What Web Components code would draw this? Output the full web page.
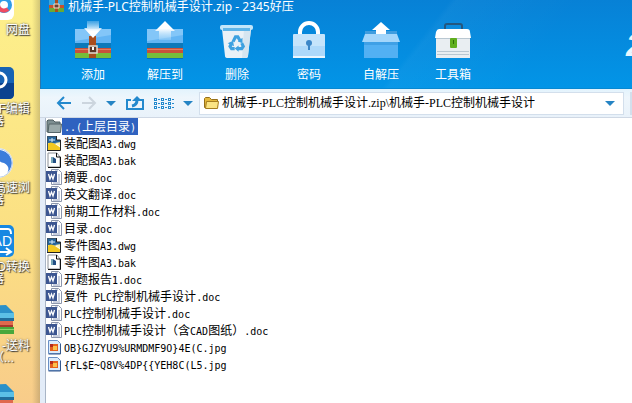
<!DOCTYPE html>
<html lang="zh-CN">
<head>
<meta charset="utf-8">
<title>2345好压</title>
<style>
  html, body { height: 100%; }
  body {
    margin: 0;
    display: grid;
    grid-template-columns: 40px minmax(0, 1fr);
    overflow: hidden;
    font: 12px/16px "Liberation Sans", "Noto Sans CJK SC", sans-serif;
    background: linear-gradient(#fdf08b, #fbdf83 60%, #f8cc8a);
  }
</style>
</head>
<body>
<desk-top>
  <desk-icon icon="cloud">网盘</desk-icon>
  <desk-icon icon="pdf">F编辑<span slot="more">器</span></desk-icon>
  <desk-icon icon="browser">高速浏<span slot="more">器</span></desk-icon>
  <desk-icon icon="cad">D转换<span slot="more">器</span></desk-icon>
  <desk-icon icon="zip">-送料<span slot="more">&nbsp; &nbsp;（...</span></desk-icon>
  <desk-icon icon="zip"></desk-icon>
</desk-top>
<zip-window>
  <span slot="title">机械手-PLC控制机械手设计.zip - 2345好压</span>
  <tool-button slot="tools" icon="add">添加</tool-button>
  <tool-button slot="tools" icon="extract">解压到</tool-button>
  <tool-button slot="tools" icon="trash">删除</tool-button>
  <tool-button slot="tools" icon="lock">密码</tool-button>
  <tool-button slot="tools" icon="sfx">自解压</tool-button>
  <tool-button slot="tools" icon="box">工具箱</tool-button>
  <address-bar path="机械手-PLC控制机械手设计.zip\机械手-PLC控制机械手设计"></address-bar>
  <file-list>
    <file-row type="up" name="..(上层目录)" selected></file-row>
    <file-row type="dwg" name="装配图A3.dwg"></file-row>
    <file-row type="bak" name="装配图A3.bak"></file-row>
    <file-row type="doc" name="摘要.doc"></file-row>
    <file-row type="doc" name="英文翻译.doc"></file-row>
    <file-row type="doc" name="前期工作材料.doc"></file-row>
    <file-row type="doc" name="目录.doc"></file-row>
    <file-row type="dwg" name="零件图A3.dwg"></file-row>
    <file-row type="bak" name="零件图A3.bak"></file-row>
    <file-row type="doc" name="开题报告1.doc"></file-row>
    <file-row type="doc" name="复件 PLC控制机械手设计.doc"></file-row>
    <file-row type="doc" name="PLC控制机械手设计.doc"></file-row>
    <file-row type="doc" name="PLC控制机械手设计（含CAD图纸）.doc"></file-row>
    <file-row type="jpg" name="OB}GJZYU9%URMDMF9O}4E(C.jpg"></file-row>
    <file-row type="jpg" name="{FL$E~Q8V%4DP{{YEH8C(L5.jpg"></file-row>
  </file-list>
</zip-window>

<script>
  const svg = (w, h, body) =>
    `<svg width="${w}" height="${h}" viewBox="0 0 ${w} ${h}" aria-hidden="true">${body}</svg>`;

  // blue / red / green stack of books, 36 wide
  const books = `
    <rect y="8" width="36" height="15" fill="#63b5f4"/>
    <path d="M0 8h36v6L0 20z" fill="#83c6f8"/>
    <rect y="22" width="36" height="5" fill="#0c79ba"/>
    <rect y="27" width="36" height="5" fill="#c9503a"/>
    <rect y="28" width="36" height="1" fill="#e27c5e"/>
    <rect y="32" width="36" height="5" fill="#76bd3a"/>
    <rect y="37" width="36" height="1" fill="#0a70b5"/>`;

  const toolIcons = {
    add: svg(36, 38, `${books}
      <rect x="14" y="15" width="7" height="22" fill="#a94d1e"/>
      <rect x="14" y="25" width="8" height="7" fill="#5a3526" stroke="#e3dcd4" stroke-width="1.5"/>
      <path d="M18 26v3" stroke="#fff" stroke-width="2"/>
      <path d="M12 0h12v7h3l-9 10-9-10h3z" fill="url(#a)"/>
      <defs><linearGradient id="a" x2="0" y2="1"><stop stop-color="#bfe2fb" stop-opacity=".3"/><stop offset=".6" stop-color="#fff"/></linearGradient></defs>`),
    extract: svg(36, 38, `${books}
      <path d="M18 0l10 10h-4v9H12v-9H8z" fill="url(#b)"/>
      <defs><linearGradient id="b" x2="0" y2="1"><stop offset=".4" stop-color="#fff"/><stop offset="1" stop-color="#a8d7f9" stop-opacity=".4"/></linearGradient></defs>`),
    trash: svg(36, 38, `
      <path d="M3 8h29l-3 27q0 2-3 2H9q-3 0-3-2z" fill="#e9f1f7"/>
      <path d="M25 8h7l-3 27q0 2-3 2h-3z" fill="#d5e5f0"/>
      <rect x="1" y="4" width="33" height="5" rx="2" fill="#c3e6fa"/>
      <path d="M4 7h27v3H4z" fill="#5fb5e8"/>
      <g transform="translate(4 5) scale(.78)">
        <g fill="none" stroke="#3da1e0" stroke-width="4">
          <path d="M13 20l3-6h3l3 5"/><path d="M24 22l2 4-2 3h-5"/><path d="M15 29h-4l-2-3 2-4"/>
        </g>
        <path d="M19 20l6 2 0-7zM20 25v8l-5-4zM6 22l7-3 1 7z" fill="#3da1e0"/>
      </g>`),
    lock: svg(36, 38, `
      <path d="M9 15v-4a9 9 0 0 1 18 0v4" fill="none" stroke="#fff" stroke-width="4"/>
      <rect x="2" y="13" width="32" height="24" rx="1" fill="#c5e4fb"/>
      <path d="M2 25h32v12H2z" fill="#aed9fa"/>
      <rect x="2" y="35" width="32" height="2" fill="#eaf6ff"/>
      <circle cx="18" cy="22" r="3" fill="#3c87c8"/><path d="M17 23h2v6h-2z" fill="#3c87c8"/>`),
    sfx: svg(40, 38, `
      <path d="M4 10h32v7H4z" fill="#3f9ddf"/>
      <path d="M20 1l9 8h-4v7H15V9h-4z" fill="#fff"/>
      <path d="M4 13h32l3 8H1z" fill="#a3d6fb"/>
      <path d="M3 21h34v16H3z" fill="#52b0f3"/>
      <path d="M3 21h34v3H3z" fill="#3fa0e6"/>`),
    box: svg(36, 38, `
      <path d="M10 9V5q0-2 2-2h13q2 0 2 2v4" fill="none" stroke="#24577f" stroke-width="2"/>
      <path d="M0 17l1-6q1-3 3-3h28q3 0 3 3l1 6z" fill="#fff"/>
      <path d="M1 17h34v20H1z" fill="#e9eef2"/>
      <path d="M1 17h34v1H1zM2 30h32v1H2zM2 33h32v1H2z" fill="#b9c7d1"/>
      <rect x="15" y="17" width="7" height="10" rx="1" fill="#5fae1f"/>
      <path d="M18 19h1v4h-1z" fill="#2d6d08"/>`)
  };

  const fileIcons = {
    up: svg(16, 16, `
      <path d="M1 3l1-1h5l2 2h5v10H1z" fill="#7e8f92" stroke="#4f5e62"/>
      <path d="M3 6h12.500l-1 8.500H2z" fill="#9aa9aa" stroke="#566568"/>`),
    dwg: svg(16, 16, `
      <path d="M1 1h10l4 4v10H1z" fill="#fff"/>
      <path d="M1 1h9v4h5v4L1 8z" fill="#28659a"/>
      <path d="M1 9q4-3 8 0l6 4v2H1z" fill="#f3c921"/>
      <path d="M9 8l6-1v5z" fill="#fdf3b4"/>
      <path d="M3 5h6M6 3v4" stroke="#d9efff"/>
      <path d="M1.500 15V1.500H11" fill="none" stroke="#37526b"/>
      <path d="M10.500 1v4h4v10.500H1" fill="none" stroke="#222"/>`),
    bak: svg(16, 16, `
      <path d="M2 1h9l3 4v10H2z" fill="#fff" stroke="#8c9197"/>
      <path d="M10.500 1v4h4v10.500H2" fill="none" stroke="#111"/>
      <path d="M5 5h2v6H5z" fill="#77a7b8"/><path d="M7 5l3 2v4H7z" fill="#234f85"/>`),
    doc: svg(16, 16, `
      <path d="M5.500.500h7l3 3v12h-10z" fill="#fff" stroke="#8c96ad"/>
      <path d="M12 6h2M12 8h2M12 10h2M12 12h2M7 14h7M9 2h3" stroke="#93a0be"/>
      <rect y="2" width="11" height="11" fill="#3c5691"/>
      <path d="M2.500 5l1.500 5 1.500-4 1.500 4 1.500-5" fill="none" stroke="#fff" stroke-width="1.300"/>`),
    jpg: svg(16, 16, `
      <path d="M2.500 1.500h9l3 3v10h-12z" fill="#dcebfb" stroke="#6a8fc4"/>
      <path d="M14.500 5v10h-12" fill="none" stroke="#35598f"/>
      <rect x="4" y="5" width="8" height="7" fill="#e5601d"/>
      <path d="M4 5h3v3H4z" fill="#b42a1c"/><path d="M7 7h4v4H7z" fill="#fbc04a"/>`)
  };

  const zipBooks = `
    <path d="M4 2l20-1 8 8v6H4z" fill="#2b91c9"/><path d="M4 9h28v5H4z" fill="#5cc0e6"/>
    <path d="M4 14h28v3H4z" fill="#216e9c"/><path d="M3 17h28v5H3z" fill="#e0694e"/>
    <path d="M3 21h28v2H3z" fill="#a8392b"/><path d="M3 23h29v7H3z" fill="#49a83c"/>
    <path d="M3 25h29v1H3z" fill="#8cd46d"/>`;

  const deskIcons = {
    cloud: svg(32, 32, `<rect width="32" height="32" rx="6" fill="#fff"/>
      <circle cx="22" cy="17" r="6" fill="none" stroke="#2f9ce8" stroke-width="4"/>
      <path d="M16 17a6 6 0 0 0 10 4" fill="none" stroke="#ef4b62" stroke-width="4"/>`),
    pdf: svg(32, 32, `<rect width="32" height="32" rx="5" fill="#1763b4"/>
      <path d="M0 16h32v11q0 5-5 5H0z" fill="#0b428f"/>
      <circle cx="17" cy="13" r="7" fill="none" stroke="#fff" stroke-width="3"/>`),
    browser: svg(32, 32, `<circle cx="16" cy="17" r="15" fill="#fff"/>
      <path d="M16 4a13 13 0 0 1 9 23q4-6-3-10-6-1-7-6z" fill="#3b7ddb"/>
      <circle cx="16" cy="17" r="14.500" fill="none" stroke="#b9cde8"/>`),
    cad: svg(32, 32, `<rect width="32" height="32" rx="5" fill="#1788e2"/>
      <path d="M4 4h22q3 0 3 5M8 27h20m-4-4l5 4-5 3" fill="none" stroke="#fff" stroke-width="2"/>
      <text x="30" y="21" text-anchor="end" font-size="14" fill="#fff">AD</text>`),
    zip: svg(32, 32, zipBooks)
  };

  class DeskTop extends HTMLElement {
    constructor() {
      super();
      this.attachShadow({ mode: 'open' }).innerHTML = `
        <style>
          :host {
            display: block;
            min-width: 0;
            overflow: hidden;
            background: linear-gradient(90deg, transparent 80%, rgba(110, 100, 70, .3));
          }
          .icons {
            display: grid;
            grid-auto-rows: 79px;
            width: 64px;
            margin: -12px 0 0 -34px;
          }
        </style>
        <div class="icons"><slot></slot></div>`;
    }
  }

  class DeskIcon extends HTMLElement {
    connectedCallback() {
      this.attachShadow({ mode: 'open' }).innerHTML = `
        <style>
          :host {
            display: flex;
            flex-direction: column;
            align-items: center;
            gap: 4px;
            color: #fff;
            line-height: 12px;
            white-space: nowrap;
            text-shadow: 1px 1px 1px #333, 0 0 2px #555;
          }
          svg { display: block; flex: none; text-shadow: none; }
          .label { align-self: flex-end; }
          .label, .more { display: block; height: 12px; }
          .more { margin-top: -4px; }
        </style>
        ${deskIcons[this.getAttribute('icon')]}
        <span class="label"><slot></slot></span>
        <span class="more"><slot name="more"></slot></span>`;
    }
  }

  class ZipWindow extends HTMLElement {
    constructor() {
      super();
      this.attachShadow({ mode: 'open' }).innerHTML = `
        <style>
          :host {
            display: flex;
            flex-direction: column;
            min-width: 0;
            overflow: hidden;
            background: #fff;
          }
          header {
            background:
              linear-gradient(128deg, transparent 62%, rgba(255, 255, 255, .03) 63%, transparent 82%),
              linear-gradient(#0781d6, #0295e7);
            color: #fff;
            border-left: 1px solid #2a76ae;
            border-bottom: 1px solid #0788d2;
            overflow: hidden;
          }
          .title {
            display: flex;
            align-items: center;
            gap: 4px;
            height: 14px;
            padding-left: 8px;
            white-space: nowrap;
            font-family: "Noto Sans", "Noto Sans CJK SC", sans-serif;
          }
          .title svg { flex: none; }
          .tools {
            display: flex;
            padding: 7px 0 5px 16px;
          }
          .brand {
            margin: 8px 0 0 auto;
            width: 6px;
            white-space: nowrap;
            color: #e8f6ff;
            font: italic bold 32px/32px "Liberation Sans", sans-serif;
          }
          .body {
            flex: 1;
            display: flex;
            flex-direction: column;
            background: #e3ecf8;
          }
        </style>
        <header>
          <div class="title">
            ${svg(15, 14, `<path d="M0 0h15v5H0z" fill="#3aa6dd"/><path d="M0 5h15v3H0z" fill="#c8512f"/><path d="M0 8h15v4H0z" fill="#6aa935"/>
              <path d="M6 0h3v12H6z" fill="#a94d1e"/><path d="M5 4h5v4H5z" fill="#6b4030" stroke="#f4e6cf"/>`)}
            <slot name="title"></slot>
          </div>
          <div class="tools"><slot name="tools"></slot><span class="brand">2</span></div>
        </header>
        <div class="body"><slot></slot></div>`;
    }
  }

  class ToolButton extends HTMLElement {
    connectedCallback() {
      this.attachShadow({ mode: 'open' }).innerHTML = `
        <style>
          :host { display: block; flex: none; width: 72px; }
          button {
            display: flex;
            flex-direction: column;
            align-items: center;
            gap: 8px;
            width: 100%;
            padding: 0;
            border: 0;
            background: none;
            color: #fff;
            font: inherit;
          }
          svg { display: block; }
        </style>
        <button type="button">${toolIcons[this.getAttribute('icon')]}<span><slot></slot></span></button>`;
    }
  }

  class AddressBar extends HTMLElement {
    connectedCallback() {
      const down = svg(10, 5, '<path d="M0 0h10L5 5z" fill="#2584c4"/>');
      // three rows of small boxes, each with a dash after it
      const cells = [0, 4, 8].map(y => [0, 7, 14].map(x =>
        `<path d="M${x} ${y}h3v3h-3z" fill="#2389cd"/><path d="M${x + 1} ${y + 1}h1v1h-1z" fill="#fff"/><path d="M${x + 4} ${y + 1}h2v1h-2z" fill="#2389cd"/>`
      ).join('')).join('');
      this.attachShadow({ mode: 'open' }).innerHTML = `
        <style>
          :host {
            display: flex;
            align-items: center;
            height: 28px;
            padding-left: 16px;
            background: linear-gradient(#e2f3fd, #eef6fc 30%, #e9f2fa);
            border-bottom: 1px solid #cfd8e4;
          }
          svg { display: block; }
          button { display: block; flex: none; padding: 0; border: 0; background: none; }
          nav { display: flex; align-items: center; gap: 9px; margin-right: 6px; }
          .path, .search {
            display: flex;
            align-items: center;
            box-sizing: border-box;
            height: 23px;
            background: #fff;
            border: 1px solid #d3dfec;
          }
          .path { flex: 1; min-width: 0; gap: 3px; padding: 0 8px 0 3px; }
          .search { width: 1px; margin-left: 6px; }
          input {
            flex: 1;
            min-width: 0;
            padding: 0;
            border: 0;
            outline: 0;
            background: none;
            color: #000;
            font: 12px/16px "Liberation Serif", "Noto Sans CJK SC", serif;
          }
        </style>
        <nav>
          <button type="button" aria-label="后退">${svg(16, 16, '<path d="M15 8H2M8 2L2 8l6 6" fill="none" stroke="#2389cd" stroke-width="2"/>')}</button>
          <button type="button" aria-label="前进">${svg(16, 16, '<path d="M1 8h13M8 2l6 6-6 6" fill="none" stroke="#ccd5de" stroke-width="2"/>')}</button>
          <button type="button" aria-label="历史">${down}</button>
          <button type="button" aria-label="向上">${svg(20, 16, '<path d="M6 5H2v9h16V5h-3" fill="none" stroke="#2389cd" stroke-width="2"/><path d="M7 11q5-1 5-6" fill="none" stroke="#2389cd" stroke-width="3"/><path d="M7 6l5-5 5 5z" fill="#2389cd"/>')}</button>
          <button type="button" aria-label="查看">${svg(20, 11, cells)}</button>
          <button type="button" aria-label="查看方式">${down}</button>
        </nav>
        <div class="path">
          ${svg(16, 16, '<path d="M1.500 12.500v-9l1-1h4l2 2h6v8z" fill="#e5b93b" stroke="#96701a"/><path d="M3.500 6.500h12l-1 7h-12z" fill="#fbe483" stroke="#a67e20"/>')}
          <input type="text" aria-label="地址">
          <button type="button" aria-label="展开">${down}</button>
        </div>
        <div class="search"></div>`;
      this.shadowRoot.querySelector('input').value = this.getAttribute('path');
    }
  }

  class FileList extends HTMLElement {
    constructor() {
      super();
      this.attachShadow({ mode: 'open' }).innerHTML = `
        <style>
          :host {
            display: block;
            flex: 1;
            margin-left: 5px;
            background: #fff;
            border-left: 1px solid #a9b5c6;
          }
        </style>
        <slot></slot>`;
    }
  }

  class FileRow extends HTMLElement {
    connectedCallback() {
      // half-width characters take half the width of a Chinese one
      const name = this.getAttribute('name')
        .replace(/[\x20-\x7e]+/g, run => `<span class="half">${run}</span>`);
      this.attachShadow({ mode: 'open' }).innerHTML = `
        <style>
          :host {
            display: flex;
            height: 17px;
            color: #000;
            line-height: 15px;
            white-space: pre;
          }
          svg { display: block; flex: none; }
          .name { padding: 0 2px; font-family: "Noto Sans CJK SC", sans-serif; }
          .half { font: 10px/15px "DejaVu Sans Mono", monospace; }
          :host([selected]) .name { background: #2f62c0; color: #fff; }
        </style>
        ${fileIcons[this.getAttribute('type')]}<span class="name">${name}</span>`;
    }
  }

  customElements.define('desk-top', DeskTop);
  customElements.define('desk-icon', DeskIcon);
  customElements.define('zip-window', ZipWindow);
  customElements.define('tool-button', ToolButton);
  customElements.define('address-bar', AddressBar);
  customElements.define('file-list', FileList);
  customElements.define('file-row', FileRow);
</script>
</body>
</html>
